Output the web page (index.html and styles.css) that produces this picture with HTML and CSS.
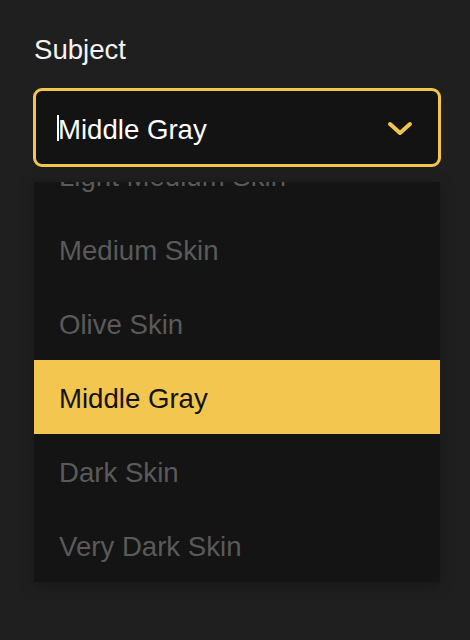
FILE: index.html
```html
<!DOCTYPE html>
<html lang="en">
<head>
<meta charset="utf-8">
<title>Subject</title>
<link rel="stylesheet" href="styles.css">
</head>
<body>
<div class="panel">
  <label class="field-label">Subject</label>
  <div class="select">
    <span class="select-value"><span class="caret"></span>Middle Gray</span>
    <svg class="chevron" width="26" height="18" viewBox="0 0 26 18" aria-hidden="true">
      <path d="M3 4 L13 13 L23 4" fill="none" stroke="#f2c54c" stroke-width="4" stroke-linecap="round" stroke-linejoin="round"/>
    </svg>
  </div>
  <ul class="options">
    <li class="option">Light Medium Skin</li>
    <li class="option">Medium Skin</li>
    <li class="option">Olive Skin</li>
    <li class="option option-active">Middle Gray</li>
    <li class="option">Dark Skin</li>
    <li class="option">Very Dark Skin</li>
  </ul>
</div>
</body>
</html>
```

FILE: styles.css
```css
html, body {
  margin: 0;
  padding: 0;
  background: #1f1f1f;
  height: 100%;
}

body {
  font-family: "Liberation Sans", Arial, Helvetica, sans-serif;
  font-size: 27.6px;
}

.panel {
  display: flex;
  flex-direction: column;
  width: 408px;
  padding: 34px 0 0 33px;
}

.field-label {
  color: #f4f4f4;
  line-height: 31px;
  margin-left: 1px;
}

.select {
  margin-top: 23px;
  box-sizing: border-box;
  height: 79px;
  border: 3px solid #f2c54c;
  border-radius: 9px;
  background: #131313;
  display: flex;
  align-items: center;
  justify-content: space-between;
  padding: 0 25px 0 21px;
}

.select-value {
  color: #ffffff;
  display: flex;
  align-items: center;
  line-height: 31px;
  padding-top: 3px;
}

.caret {
  display: inline-block;
  width: 2px;
  height: 26px;
  background: #ffffff;
  margin-right: -1px;
  margin-top: -2px;
}

.chevron {
  display: block;
  margin-top: 2px;
}

.options {
  list-style: none;
  margin: 15px 1px 0 1px;
  padding: 0;
  height: 400px;
  overflow: hidden;
  background: #141414;
  display: flex;
  flex-direction: column;
  justify-content: flex-end;
  box-shadow: 0 3px 14px rgba(0, 0, 0, 0.25);
}

.option {
  flex: 0 0 74px;
  display: flex;
  align-items: center;
  padding: 2px 0 0 25px;
  box-sizing: border-box;
  color: #5a5a5a;
  line-height: 31px;
}

.option-active {
  background: #f3c64f;
  color: #121212;
}
```
